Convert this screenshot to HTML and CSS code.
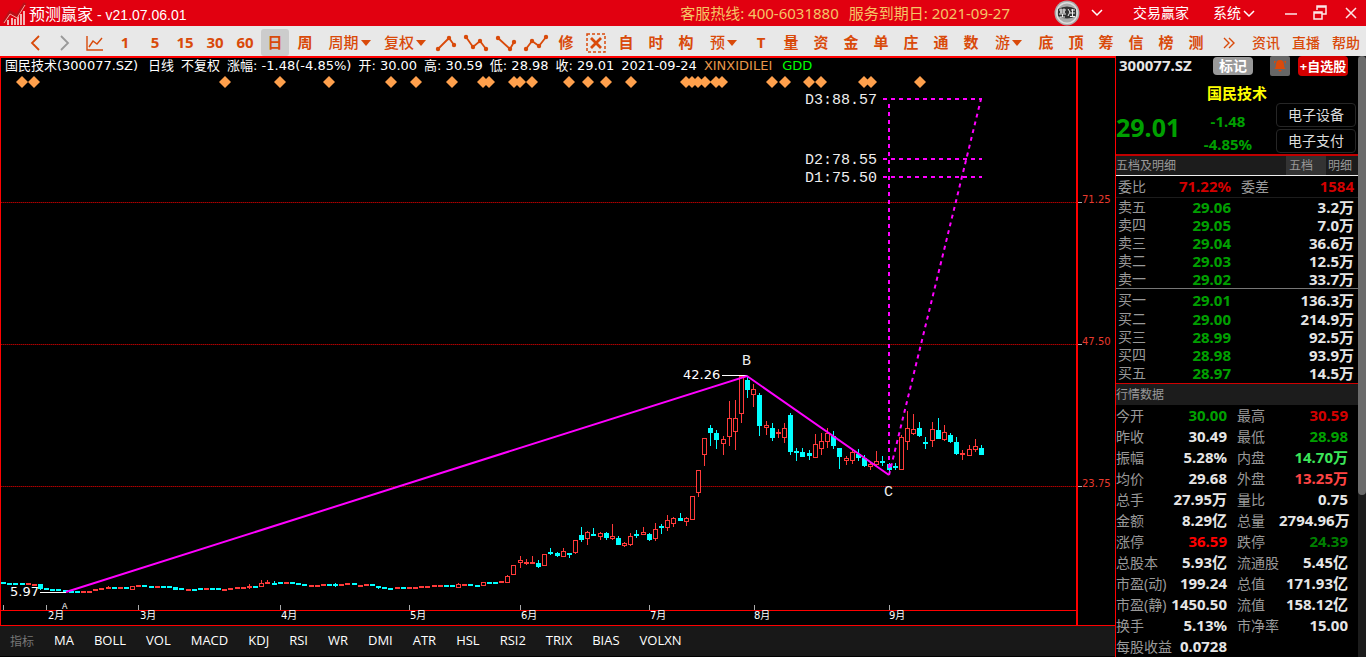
FILE: index.html
```html
<!DOCTYPE html>
<html lang="zh-CN">
<head>
<meta charset="utf-8">
<title>预测赢家</title>
<link rel="stylesheet" href="styles.css">
</head>
<body>
<div class="app">
  <header class="titlebar">
    <svg class="logo" width="24" height="26" viewBox="0 0 24 26">
      <path d="M4 25v-5h2v5zM8 25v-7h2v7zM11 25v-6h2v6zM14 25v-9h2v9zM17 25v-11h2v11zM20 25V11h2v14z" fill="#f4b5b5"/>
      <path d="M1 22 7 12l7 4 8-13" fill="none" stroke="#b81018" stroke-width="3"/>
      <path d="M1 23 7 14l7 4 8-13" fill="none" stroke="#f7a8a0" stroke-width="1"/>
    </svg>
    <span class="app-name">预测赢家</span>
    <span class="app-version">- v21.07.06.01</span>
    <div class="title-right">
      <span class="hotline">客服热线: 400-6031880</span>
      <span class="expiry">服务到期日: 2021-09-27</span>
      <svg class="avatar" width="26" height="26" viewBox="0 0 26 26">
        <circle cx="13" cy="13" r="12.5" fill="#aaa"/><circle cx="13" cy="13" r="11" fill="#ddd"/><circle cx="13" cy="13" r="9.5" fill="#aaa"/>
        <path d="M4 9q9-5 18 0v7q-9 5-18 0z" fill="#333"/>
        <path d="M5 10h7M6 12h5M5 14h7M7 8.500v5M10 8.500v5M8.500 14v3M6 17h5M14 9l2 3-2 4M17 10h4M16 13h5M18.500 9v7M16 16.500h5" stroke="#eee" fill="none"/>
      </svg>
      <svg class="chev" width="12" height="8" viewBox="0 0 12 8"><path d="m1 1 5 5 5-5"/></svg>
      <button class="title-btn mode">交易赢家</button>
      <button class="title-btn">系统<svg class="chev" width="12" height="8" viewBox="0 0 12 8"><path d="m1 1 5 5 5-5"/></svg></button>
      <button class="win-btn min" aria-label="最小化"><svg width="12" height="12" viewBox="0 0 12 12"><path d="M0 7h12" stroke-width="2"/></svg></button>
      <button class="win-btn restore" aria-label="还原"><svg width="14" height="16" viewBox="0 0 14 16"><path d="M4 5V1h9v8H9M4 2h9M1 7h8v7H1zM1 8h8"/></svg></button>
      <button class="win-btn" aria-label="关闭"><svg width="12" height="12" viewBox="0 0 12 12"><path d="m1 1 10 10M11 1 1 11" stroke-width="2"/></svg></button>
    </div>
  </header>

  <nav class="toolbar">
    <button class="tool" aria-label="后退"><svg width="12" height="16" viewBox="0 0 12 16"><path d="m10 1-7 7 7 7"/></svg></button>
    <button class="tool dim" aria-label="前进"><svg width="12" height="16" viewBox="0 0 12 16"><path d="m2 1 7 7-7 7"/></svg></button>
    <button class="tool" aria-label="走势图"><svg width="18" height="16" viewBox="0 0 18 16"><path d="M1 1v14h16M3 12l4-6 4 3 5-6" stroke-width="1.4"/></svg></button>
    <button class="tool">1</button>
    <button class="tool">5</button>
    <button class="tool">15</button>
    <button class="tool">30</button>
    <button class="tool">60</button>
    <button class="tool active">日</button>
    <button class="tool">周</button>
    <button class="tool wide">周期<i class="caret"></i></button>
    <button class="tool wide narrow">复权<i class="caret"></i></button>
    <button class="tool" aria-label="顶部形态"><svg width="22" height="18" viewBox="0 0 22 18"><path d="M3 15 14 4l5 7"/><g class="dots"><circle cx="3" cy="15" r="2.2"/><circle cx="14" cy="4" r="2.2"/><circle cx="19" cy="11" r="2.2"/></g></svg></button>
    <button class="tool" aria-label="下跌形态"><svg width="26" height="18" viewBox="0 0 26 18"><path d="m3 3 7 10 7-6 6 8"/><g class="dots"><circle cx="3" cy="3" r="2.2"/><circle cx="10" cy="13" r="2.2"/><circle cx="17" cy="7" r="2.2"/><circle cx="23" cy="15" r="2.2"/></g></svg></button>
    <button class="tool" aria-label="底部形态"><svg width="22" height="18" viewBox="0 0 22 18"><path d="m3 4 12 11 4-7"/><g class="dots"><circle cx="3" cy="4" r="2.2"/><circle cx="15" cy="15" r="2.2"/><circle cx="19" cy="8" r="2.2"/></g></svg></button>
    <button class="tool" aria-label="上涨形态"><svg width="26" height="18" viewBox="0 0 26 18"><path d="m3 15 6-8 7 5 7-9"/><g class="dots"><circle cx="3" cy="15" r="2.2"/><circle cx="9" cy="7" r="2.2"/><circle cx="16" cy="12" r="2.2"/><circle cx="23" cy="3" r="2.2"/></g></svg></button>
    <button class="tool">修</button>
    <button class="tool" aria-label="清除"><svg width="20" height="20" viewBox="0 0 20 20"><path d="M1 1h18v18H1z" stroke-width="1.5" stroke-dasharray="3 2"/><path d="m5 5 10 10M15 5 5 15" stroke-width="2.8"/></svg></button>
    <button class="tool">自</button>
    <button class="tool">时</button>
    <button class="tool">构</button>
    <button class="tool mid">预<i class="caret"></i></button>
    <button class="tool">T</button>
    <button class="tool">量</button>
    <button class="tool">资</button>
    <button class="tool">金</button>
    <button class="tool">单</button>
    <button class="tool">庄</button>
    <button class="tool">通</button>
    <button class="tool">数</button>
    <button class="tool mid">游<i class="caret"></i></button>
    <button class="tool">底</button>
    <button class="tool">顶</button>
    <button class="tool">筹</button>
    <button class="tool">信</button>
    <button class="tool">榜</button>
    <button class="tool">测</button>
    <div class="tool-links">
      <button class="tool" aria-label="更多"><svg width="12" height="12" viewBox="0 0 12 12"><path d="m1 1 5 5-5 5M6 1l5 5-5 5" stroke-width="1.4"/></svg></button>
      <button class="tool link">资讯</button>
      <button class="tool link">直播</button>
      <button class="tool link">帮助</button>
    </div>
  </nav>

  <div class="body">
    <main class="left">
      <section class="chart">
        <svg class="plot" viewBox="1 58 1114 567">
          <g class="crisp">
            <path class="frame" d="M1077 58v567"/>
            <path class="axis" d="M0 610.500h1077"/>
            <path class="grid-base" d="M1 202.500h1075M1 344.500h1075M1 486.500h1075"/>
            <path class="grid" d="M1 202.500h1075M1 344.500h1075M1 486.500h1075"/>
            <path class="ticks" d="M1078 202.500h4M1078 344.500h4M1078 486.500h4M3.500 605v5M46.500 605v5M138.500 605v5M280.500 605v5M409.500 605v5M520.500 605v5M649.500 605v5M754.500 605v5M889.500 605v5"/>
          </g>
          <g class="diamonds" id="diamonds"></g>
          <g class="crisp" id="candles"></g>
          <path class="lead crisp" d="M40 592.500h26M722 375.500h25"/>
          <path class="wave" d="M66 592 747 376l142 99"/>
          <path class="proj" d="M883 99h99M883 159h99M883 177h99M889 104v368M889 475l92-376"/>
          <g class="price-label"><text x="1082" y="203">71.25</text><text x="1082" y="345">47.50</text><text x="1082" y="487">23.75</text></g>
          <g class="month"><text x="48" y="619">2月</text><text x="140" y="619">3月</text><text x="281" y="619">4月</text><text x="410" y="619">5月</text><text x="521" y="619">6月</text><text x="650" y="619">7月</text><text x="754" y="619">8月</text><text x="889" y="619">9月</text></g>
          <g class="value"><text x="10" y="596">5.97</text><text x="683" y="379">42.26</text></g>
          <g class="mark"><text x="805" y="104">D3:88.57</text><text x="805" y="164">D2:78.55</text><text x="805" y="182">D1:75.50</text><text x="742" y="365">B</text><text x="884" y="496">C</text></g>
          <text class="mark-small" x="62" y="609">A</text>
        </svg>
        <div class="quote-line">
          <span class="sym">国民技术(300077.SZ)</span><span>日线</span><span>不复权</span><span>涨幅: -1.48(-4.85%)</span>
          <span>开: 30.00</span><span>高: 30.59</span><span>低: 28.98</span><span>收: 29.01</span><span>2021-09-24</span>
          <span class="ind-a">XINXIDILEI</span><span class="ind-b">GDD</span>
        </div>
      </section>
      <nav class="indicators">
        <span class="ind-title">指标</span>
        <button>MA</button><button>BOLL</button><button>VOL</button><button>MACD</button><button>KDJ</button><button>RSI</button><button>WR</button><button>DMI</button><button>ATR</button><button>HSL</button><button>RSI2</button><button>TRIX</button><button>BIAS</button><button>VOLXN</button>
      </nav>
    </main>

    <aside class="side">
      <div class="side-main">
        <div class="code-row">
          <span class="code">300077.SZ</span>
          <button class="tag">标记</button>
          <button class="bell" aria-label="预警"><svg width="14" height="14" viewBox="0 0 14 14"><path d="M7 1q4 0 4 5 0 3 2 4H1q2-1 2-4 0-5 4-5zM5 11h4l-2 2zM1 2l2 0-2 3zM13 2l-2 0 2 3z" fill="#d94a0a"/></svg></button>
          <button class="add">+自选股</button>
        </div>
        <div class="summary">
          <div class="name">国民技术</div>
          <div class="last">29.01</div>
          <div class="delta"><span>-1.48</span><span>-4.85%</span></div>
          <div class="sectors"><button>电子设备</button><button>电子支付</button></div>
        </div>
        <div class="section tabs"><span>五档及明细</span><button class="on">五档</button><button>明细</button></div>
        <table class="book">
          <tbody class="ratio"><tr><th>委比</th><td class="red">71.22%</td><th class="diff">委差</th><td class="red">1584</td></tr></tbody>
          <tbody class="sell">
            <tr><th>卖五</th><td class="green">29.06</td><td colspan="2">3.2万</td></tr>
            <tr><th>卖四</th><td class="green">29.05</td><td colspan="2">7.0万</td></tr>
            <tr><th>卖三</th><td class="green">29.04</td><td colspan="2">36.6万</td></tr>
            <tr><th>卖二</th><td class="green">29.03</td><td colspan="2">12.5万</td></tr>
            <tr><th>卖一</th><td class="green">29.02</td><td colspan="2">33.7万</td></tr>
          </tbody>
          <tbody class="buy">
            <tr><th>买一</th><td class="green">29.01</td><td colspan="2">136.3万</td></tr>
            <tr><th>买二</th><td class="green">29.00</td><td colspan="2">214.9万</td></tr>
            <tr><th>买三</th><td class="green">28.99</td><td colspan="2">92.5万</td></tr>
            <tr><th>买四</th><td class="green">28.98</td><td colspan="2">93.9万</td></tr>
            <tr><th>买五</th><td class="green">28.97</td><td colspan="2">14.5万</td></tr>
          </tbody>
        </table>
        <div class="section data-head">行情数据</div>
        <table class="data">
          <tr><th>今开</th><td class="green">30.00</td><th>最高</th><td class="red">30.59</td></tr>
          <tr><th>昨收</th><td>30.49</td><th>最低</th><td class="green">28.98</td></tr>
          <tr><th>振幅</th><td>5.28%</td><th>内盘</th><td class="lime">14.70万</td></tr>
          <tr><th>均价</th><td>29.68</td><th>外盘</th><td class="coral">13.25万</td></tr>
          <tr><th>总手</th><td>27.95万</td><th>量比</th><td>0.75</td></tr>
          <tr><th>金额</th><td>8.29亿</td><th>总量</th><td>2794.96万</td></tr>
          <tr><th>涨停</th><td class="bright">36.59</td><th>跌停</th><td class="deep">24.39</td></tr>
          <tr><th>总股本</th><td>5.93亿</td><th>流通股</th><td>5.45亿</td></tr>
          <tr><th>市盈(动)</th><td>199.24</td><th>总值</th><td>171.93亿</td></tr>
          <tr><th>市盈(静)</th><td>1450.50</td><th>流值</th><td>158.12亿</td></tr>
          <tr><th>换手</th><td>5.13%</td><th>市净率</th><td>15.00</td></tr>
          <tr><th>每股收益</th><td>0.0728</td><th></th><td></td></tr>
        </table>
      </div>
      <div class="scroll"><div class="thumb"></div></div>
    </aside>
  </div>
</div>
<script src="chart.js"></script>
</body>
</html>
```
FILE: styles.css
```css
* { box-sizing: border-box; }
body {
  margin: 0;
  background: #000;
  color: #e6e6e6;
  font-family: "Noto Sans", "Noto Sans CJK SC", sans-serif;
}
button {
  border: 0;
  padding: 0;
  background: none;
  color: inherit;
  font: inherit;
  white-space: nowrap;
}
.app { display: flex; flex-direction: column; height: 100vh; overflow: hidden; }

.titlebar {
  display: flex;
  align-items: center;
  flex: none;
  height: 26px;
  padding: 0 9px 0 3px;
  background: #e10010;
  color: #fff;
  white-space: nowrap;
}
.logo { flex: none; margin-right: 2px; }
.app-name { font: 16px/26px "Noto Sans CJK SC", sans-serif; margin-right: 4px; }
.app-version { font: 14px/26px "Liberation Sans", sans-serif; padding-top: 4px; }
.title-right { display: flex; align-items: center; margin-left: auto; font-size: 14px; line-height: 24px; }
.hotline, .expiry { font-size: 15px; color: #f5c566; margin-right: 10px; }
.expiry { margin-right: 44px; }
.avatar { margin-right: 11px; }
.chev path, .win-btn path { fill: none; stroke: #fff; stroke-width: 1.5; }
.mode { margin: 0 24px 0 30px; }
.title-btn .chev { margin-left: 2px; }
.win-btn { display: flex; }
.min { margin: 0 16px 0 30px; }
.restore { margin-right: 18px; }
.win-btn path { opacity: .9; }

.toolbar {
  display: flex;
  flex: none;
  height: 30px;
  padding: 3px 0 0 20px;
  background: #e8e8e8;
  color: #d94a0a;
}
.tool {
  display: flex;
  align-items: center;
  justify-content: center;
  flex: none;
  width: 30px;
  height: 27px;
  font-size: 15px;
  font-weight: 700;
  line-height: 27px;
}
.tool svg { fill: none; stroke: #d94a0a; stroke-width: 1.8; }
.tool .dots { fill: #d94a0a; stroke: none; }
.tool.dim svg { stroke: #999; }
.active { width: 28px; margin: 0 1px; background: #ccc; border-radius: 3px; }
.wide { width: 59px; font-weight: 500; }
.narrow { width: 52px; }
.mid { width: 45px; font-weight: 500; }
.caret { margin-left: 2px; border: 5px solid transparent; border-top: 6px solid #d94a0a; border-bottom: 0; }
.tool-links { display: flex; margin-left: auto; }
.tool-links .tool { width: 34px; }
.tool-links .link { width: 40px; font-size: 14px; font-weight: 500; }

.body { display: flex; flex: 1; min-height: 0; }
.left { display: flex; flex-direction: column; flex: 1; min-width: 0; }
.chart {
  display: grid;
  flex: 1;
  min-height: 0;
  border-top: 2px solid #f00;
  border-left: 1px solid #f00;
}
.plot, .quote-line { grid-area: 1 / 1; }
.plot { display: block; width: 100%; height: 100%; min-height: 0; }
.quote-line {
  display: flex;
  align-self: start;
  gap: 7px;
  padding-left: 4px;
  color: #fff;
  font: 13px/16px "DejaVu Sans", "Noto Sans CJK SC", sans-serif;
  white-space: nowrap;
}
.sym { margin-right: 3px; }
.ind-a { color: #e8964a; margin-right: 3px; }
.ind-b { color: #0f0; }
.crisp { shape-rendering: crispEdges; }
.frame { stroke: #f00; stroke-width: 2; }
.axis { stroke: #f00; }
.grid-base { stroke: #500; }
.grid { stroke: #a00; stroke-dasharray: 1 1; }
.ticks { stroke: #aaa; }
.diamonds { fill: #ffa04c; }
.up { fill: #ff3a3a; }
.up-body { fill: #000; stroke: #ff3a3a; }
.down { fill: #0ff; }
.lead { stroke: #fff; }
.wave { fill: none; stroke: #f0f; stroke-width: 2; }
.proj { fill: none; stroke: #f0f; stroke-width: 2; stroke-dasharray: 4 4; }
.price-label { fill: #e83a2e; font: 10px "DejaVu Sans", sans-serif; }
.month { fill: #fff; font: 10px "DejaVu Sans", "Noto Sans CJK SC", sans-serif; }
.value { fill: #fff; font: 13px "DejaVu Sans", sans-serif; }
.mark { fill: #eee; font: 15px "Liberation Mono", monospace; }
.mark-small { fill: #fff; font: 9px "Liberation Mono", monospace; }

.indicators {
  display: flex;
  align-items: center;
  flex: none;
  gap: 20px;
  height: 32px;
  padding: 0 10px 2px;
  border-top: 1px solid #f00;
  border-bottom: 1px solid #000;
  background: #181818;
  color: #fff;
  font: 13px "Open Sans", sans-serif;
}
.ind-title { color: #777; font: 12px "Noto Sans CJK SC", sans-serif; }

.side { display: flex; flex: none; width: 251px; border-left: 1px solid #f00; }
.side-main { flex: 1; min-width: 0; }
.scroll { flex: none; width: 8px; background: #1c1c1c; }
.thumb { height: 73%; background: #6b6b6b; border-radius: 4px; }
.code-row { display: flex; align-items: center; height: 20px; padding-left: 3px; font-size: 15px; font-weight: 700; line-height: 20px; }
.code { padding-bottom: 3px; }
.tag { width: 40px; height: 18px; margin-left: auto; border-radius: 4px; background: #999; color: #fff; font-size: 14px; line-height: 18px; }
.bell { display: flex; align-items: center; justify-content: center; width: 20px; height: 20px; margin: 0 8px 0 17px; border-radius: 2px; background: #666; }
.add { width: 50px; height: 20px; margin-right: 10px; border-radius: 4px; background: #d40000; color: #fff; font-size: 13px; line-height: 20px; }
.summary {
  display: grid;
  grid-template-columns: 79px 1fr 80px;
  grid-template-rows: 27px 50px;
  height: 80px;
  padding-right: 2px;
  border-bottom: 2px solid #c00000;
  color: #00a000;
  font-weight: 700;
}
.name { grid-column: 1 / 4; padding: 4px 0 0 91px; color: #ff0; font-size: 15px; line-height: 26px; }
.last { font-size: 25px; line-height: 48px; }
.delta { display: flex; flex-direction: column; align-items: center; padding: 7px 15px 0 0; font-size: 15px; line-height: 23px; }
.sectors { display: flex; flex-direction: column; gap: 2px; }
.sectors button { height: 24px; border: 1px solid #262626; border-radius: 4px; color: #ddd; font-size: 14px; font-weight: 400; line-height: 22px; }
.section { background: #1c1c1c; color: #999; font-size: 12px; line-height: 19px; }
.tabs { display: flex; height: 20px; border-bottom: 1px solid #eee; }
.tabs span { flex: 1; }
.tabs button { width: 40px; }
.tabs button:last-child { width: 32px; padding: 0 4px 0 0; }
.tabs .on { background: #333; padding: 0 10px 0 0; }
table { width: 100%; border-collapse: collapse; table-layout: fixed; }
th, td { padding: 0; overflow: visible; white-space: nowrap; font-size: 15px; }
th { color: #999; font-size: 14px; font-weight: 400; text-align: left; }
td { color: #e6e6e6; font-weight: 700; text-align: right; }
.book th:first-child { width: 42px; padding-left: 2px; }
.book td:nth-child(2) { width: 73px; }
.book td:last-child { padding-right: 4px; }
.book .diff { width: 50px; padding-left: 10px; }
.book tr { height: 18px; line-height: 18px; }
.book .ratio tr { height: 21px; line-height: 21px; }
.ratio { border-bottom: 1px solid #1c1c1c; }
.buy { border-top: 1px solid #777; }
.book .buy tr:first-child { height: 21px; }
.buy tr:first-child th, .buy tr:first-child td { padding-top: 2px; }
.data-head { margin-top: 1px; border-top: 1px solid #d00000; height: 22px; line-height: 22px; }
.data th { width: 50px; }
.data td { width: 61px; }
.data th:nth-child(3) { width: 52px; padding-left: 10px; }
.data td:last-child { width: auto; padding-right: 10px; }
.data tr { height: 21px; line-height: 21px; }
table .green { color: #00a000; }
table .red { color: #d40000; }
table .lime { color: #3ce65a; }
table .coral { color: #ff4444; }
table .bright { color: #f00; }
table .deep { color: #008000; }
```
FILE: chart.js
```js
const NS = 'http://www.w3.org/2000/svg';

function add(parent, name, attrs) {
  const node = document.createElementNS(NS, name);
  for (const key in attrs) node.setAttribute(key, attrs[key]);
  parent.appendChild(node);
}

const diamonds = document.getElementById('diamonds');
[22, 34, 225, 280, 329, 391, 416, 452, 483, 489, 514, 520, 532, 569, 588, 606, 631, 686, 692, 698, 705, 716, 722,
 772, 785, 809, 821, 864, 871, 920].forEach(x => {
  add(diamonds, 'path', { d: `M${x} 76l6 6-6 6-6-6z` });
});

// Direction and x, then either the body top, or high, body top, body bottom, low.
const candles = `
d3 582,d9 583,d15 583,d22 583,u28 583,u34 584,d40 584 584 589 590,d46 588,d52 589,d58 589,d65 590,d71 591,d77 591,
u83 591,u89 591,u95 589,u101 588,u108 586 587 589 589,d114 587,u120 587,d126 587,u132 586 586 590 590,u138 585,d144 585,
d151 586,u157 586,d163 586,d169 586,d175 587 587 590 590,d181 588,u188 589,d194 589,d200 588,u206 588,d212 588,d218 588,
u224 589,u230 588,u237 587,u243 587,u249 584 586 588 589,d255 586,u261 580 583 587 587,u267 580 582 584 584,
d274 581 583 585 585,d280 582,u286 582,d292 582,d298 583,d304 584,u311 585,u317 585,u323 584,d329 584,
d335 583 584 586 587,u341 584,u347 583,d354 583,u360 585,u366 584,d372 584,d378 586 586 588 589,d384 587,d390 588,u397 587,
d403 587,u409 587,u415 587,u421 586,u427 586,u434 585,u440 585,d446 585,d452 585,u458 583 584 588 588,u464 584,d470 584,
d477 585,u483 582 582 586 586,d489 582,d495 582,u501 581,u507 575 576 583 583,u513 565 565 575 575,u520 556 560 563 568,
u526 559 562 564 565,u532 556 562 564 564,d538 560 563 567 568,u544 554 554 566 566,d550 548 552 554 555,
d557 552 553 556 557,u563 548 551 557 557,d569 553 553 555 558,u575 540 540 553 554,d581 527 535 540 542,
u587 531 532 539 545,d593 528 534 536 536,u600 532 533 537 540,d606 532 533 538 540,u612 524 536 539 540,
d618 536 538 545 545,u624 542 543 546 547,u630 533 536 545 546,d636 530 534 536 538,u643 527 532 535 535,
d649 533 534 540 541,u655 523 529 539 541,d661 524 526 528 534,u667 515 520 528 531,u673 517 518 524 527,
d680 513 518 521 521,u686 517 518 522 526,u692 496 496 520 520,u698 470 470 493 497,u704 438 438 455 466,
d710 425 428 433 446,d716 430 433 440 449,u723 436 439 444 455,u729 401 418 437 446,u735 400 418 432 450,
u741 376 376 414 423,d747 376 380 390 398,u753 384 389 395 407,d759 393 395 426 436,u766 421 425 428 435,
d772 423 428 438 441,u778 429 432 434 438,u784 423 428 438 443,d790 413 415 452 455,d796 448 451 453 461,
d802 448 452 457 457,d809 450 453 456 460,u815 434 444 458 458,u821 433 441 449 455,u827 428 433 442 448,
d833 431 436 446 449,d839 448 448 457 469,u846 456 458 461 465,u852 450 452 461 464,d858 449 454 458 461,
d864 455 458 466 467,u870 462 464 467 470,u876 451 461 465 466,d882 456 461 463 466,d889 463 464 470 472,
d895 463 466 468 470,u901 435 437 470 470,u907 411 428 442 450,u913 414 429 434 435,d919 422 428 436 437,
d925 437 442 444 449,u932 422 429 441 447,d938 418 430 439 439,u944 425 432 440 441,d950 433 435 442 443,
d956 437 442 454 455,u962 450 453 455 460,u969 445 449 456 456,u975 439 446 450 452,d981 445 448 455 455`;

const layer = document.getElementById('candles');
candles.trim().split(/,\s*/).forEach(item => {
  const up = item[0] === 'u';
  const v = item.slice(1).split(' ').map(Number);
  const x = v[0];
  const [high, top, bottom, low] = v.length > 2 ? v.slice(1) : [v[1], v[1], v[1] + 2, v[1] + 2];
  const cls = up ? 'up' : 'down';
  add(layer, 'rect', { class: cls, x, y: high, width: 1, height: low - high });
  if (up && bottom - top > 2) {
    add(layer, 'rect', { class: 'up-body', x: x - 1.5, y: top + 0.5, width: 4, height: bottom - top - 1 });
  } else {
    add(layer, 'rect', { class: cls, x: x - 2, y: top, width: 5, height: bottom - top });
  }
});
```
